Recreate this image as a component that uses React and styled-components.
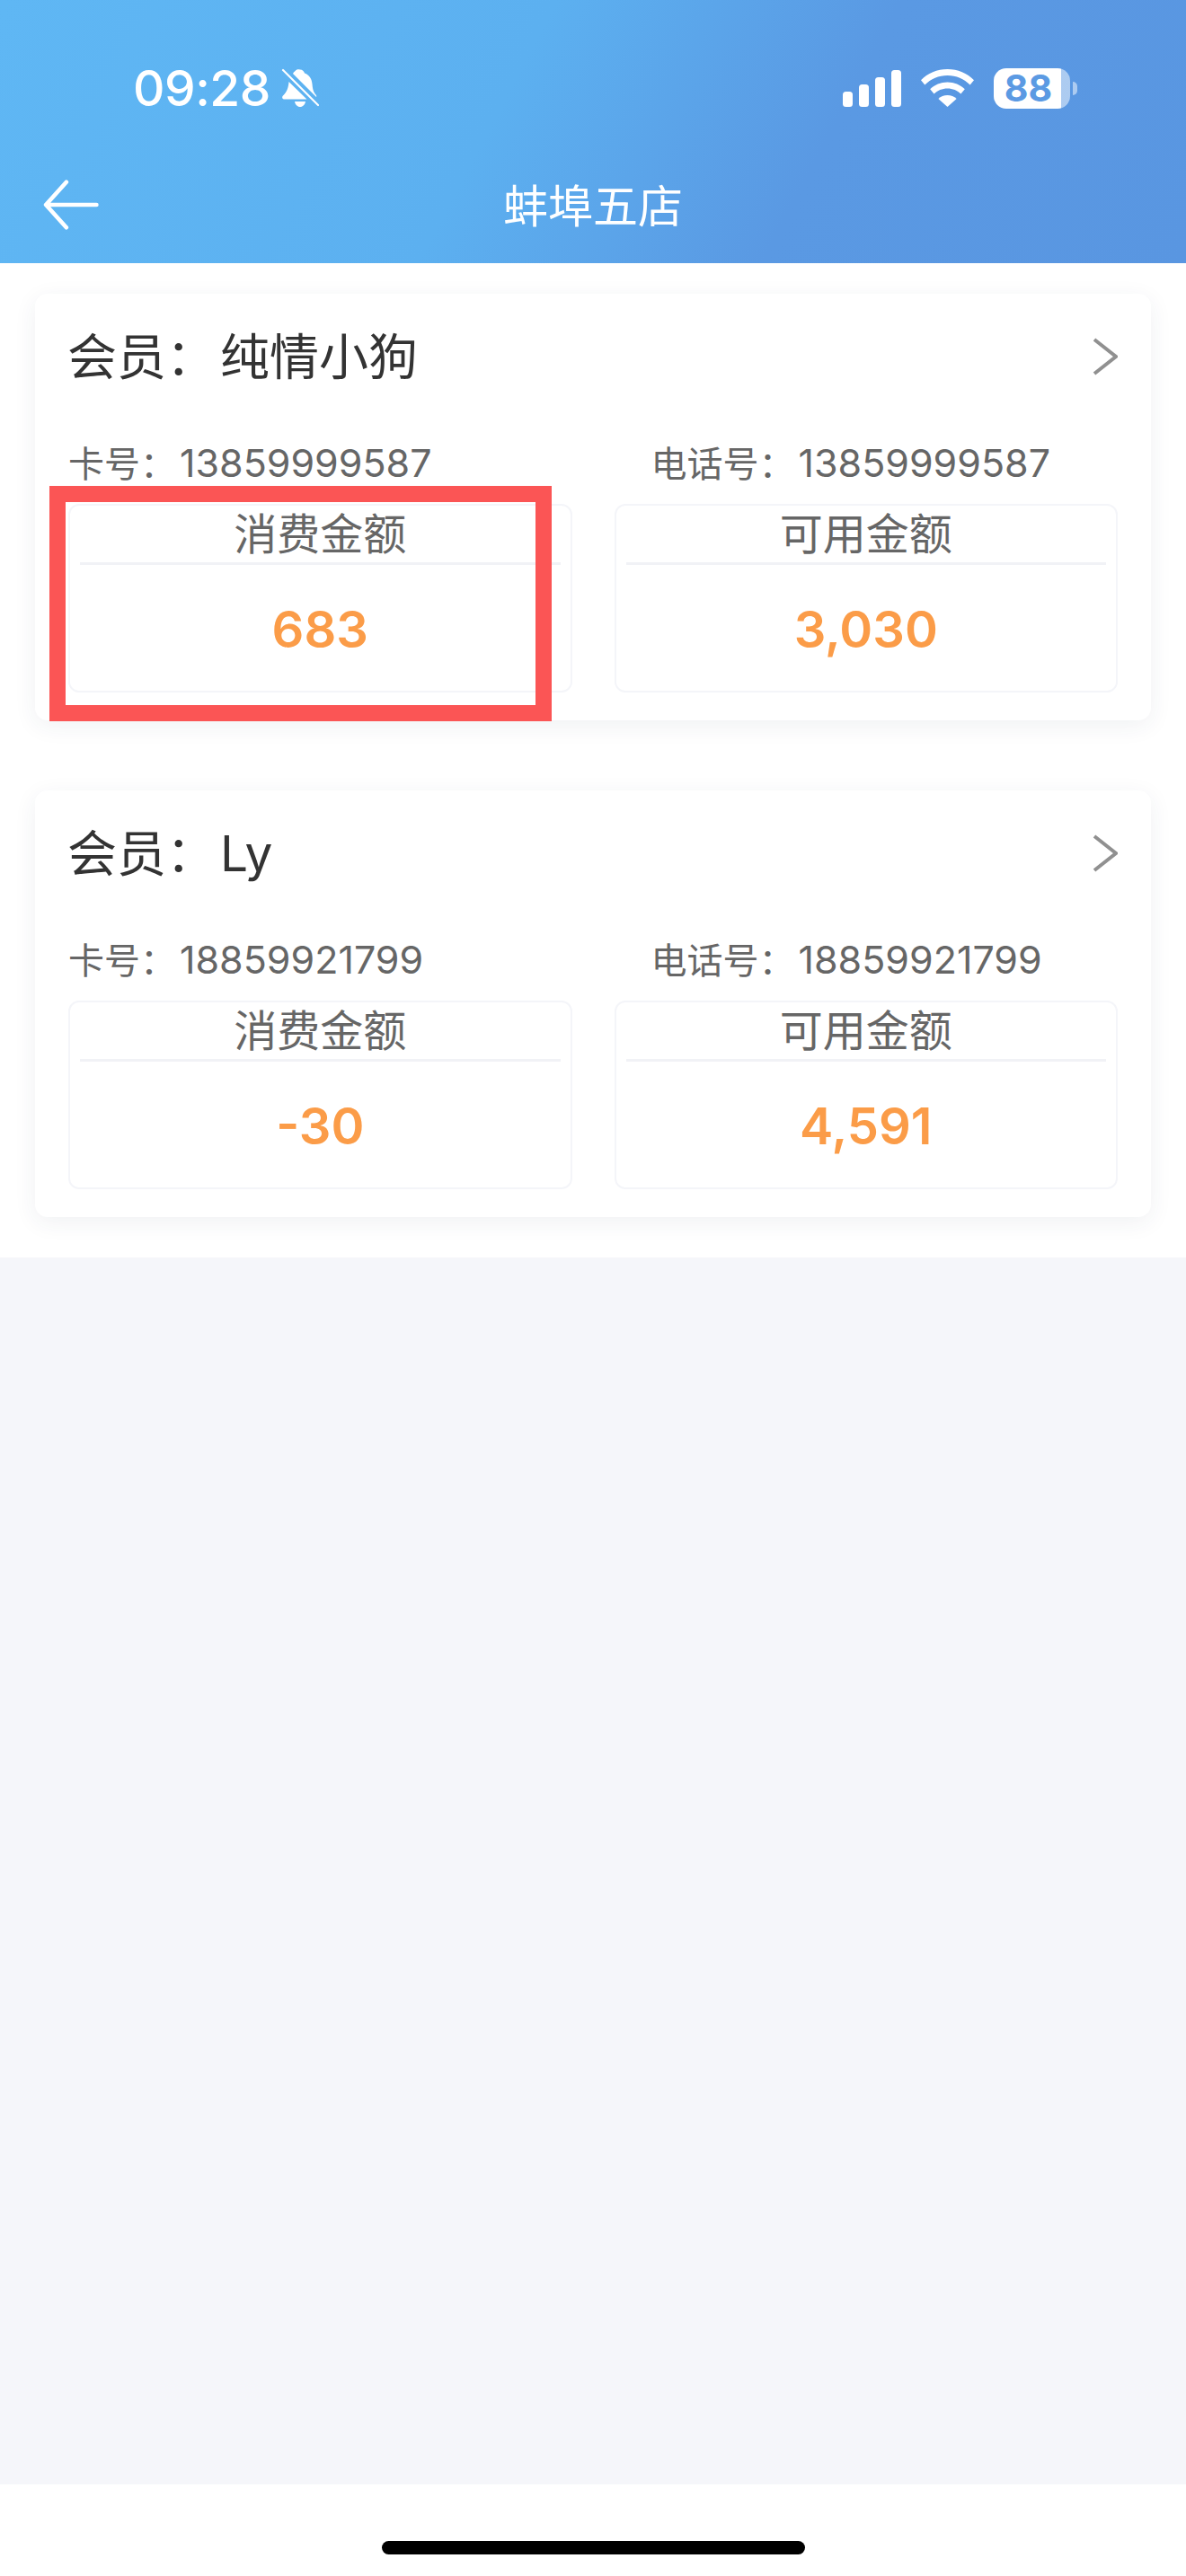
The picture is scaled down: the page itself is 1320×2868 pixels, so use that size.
import React from 'react'
import styled, { createGlobalStyle } from 'styled-components'

const FONT = '"Inter", "Noto Sans CJK SC", sans-serif'

const GlobalStyle = createGlobalStyle`
  *, *::before, *::after { box-sizing: border-box; }
  html, body { margin: 0; padding: 0; background: #fff; }
  body { font-family: ${FONT}; }
`

const members = [
  { name: '纯情小狗', card: '13859999587', phone: '13859999587', spent: '683', balance: '3,030', marked: true },
  { name: 'Ly', card: '18859921799', phone: '18859921799', spent: '-30', balance: '4,591' },
]

const App = () => {
  return (
    <Page>
      <GlobalStyle />
      <Header>
        <StatusBar>
          <StatusLeft>
            <Clock>09:28</Clock>
            <MuteBell />
          </StatusLeft>
          <StatusRight>
            <SignalBars />
            <WifiIcon />
            <Battery>88</Battery>
          </StatusRight>
        </StatusBar>
        <NavBar>
          <BackArrow />
          <NavTitle>蚌埠五店</NavTitle>
          <span />
        </NavBar>
      </Header>

      <ListSection>
        {members.map((m) => (
          <MemberCard key={m.card}>
            <CardTop>
              <MemberName>
                会员：<NameValue>{m.name}</NameValue>
              </MemberName>
              <Chevron />
            </CardTop>
            <InfoRow>
              <InfoText>
                卡号：<InfoValue>{m.card}</InfoValue>
              </InfoText>
              <InfoText $indent>
                电话号：<InfoValue>{m.phone}</InfoValue>
              </InfoText>
            </InfoRow>
            <StatGrid>
              <StatBox $marked={m.marked}>
                <StatLabel>消费金额</StatLabel>
                <StatValue>{m.spent}</StatValue>
              </StatBox>
              <StatBox>
                <StatLabel>可用金额</StatLabel>
                <StatValue>{m.balance}</StatValue>
              </StatBox>
            </StatGrid>
          </MemberCard>
        ))}
      </ListSection>

      <EmptyArea />

      <HomeBar>
        <HomeIndicator />
      </HomeBar>
    </Page>
  )
}

const MuteBell = () => (
  <BellSvg viewBox="0 0 42 44">
    <path
      d="M21 1.500c2.600 0 4.400 1.700 5 4 5.500 2 8 6.500 8.500 12 .4 5 1 8.500 4 12 .8 1 1 2 .5 2.500L13 6c1-2 3-3.500 4.500-4.500C18.500 1 20 1.500 21 1.500Z"
      fill="#fff"
    />
    <path d="M8.500 15 28.500 34.500H3.500C1 34.500.5 32 2 30.500c4-4 6-8.500 6.500-15.500Z" fill="#fff" />
    <path d="M15 37h12c-.6 3.600-3 6-6 6s-5.400-2.400-6-6Z" fill="#fff" />
    <path d="M2 2 41 41" stroke="#fff" strokeWidth="2.200" strokeLinecap="round" />
  </BellSvg>
)

const SignalBars = () => (
  <SignalSvg viewBox="0 0 65 41" fill="#fff">
    <rect x="0" y="24" width="11" height="17" rx="3.500" />
    <rect x="18" y="16" width="11" height="25" rx="3.500" />
    <rect x="36" y="8" width="11" height="33" rx="3.500" />
    <rect x="54" y="0" width="11" height="41" rx="3.500" />
  </SignalSvg>
)

const WifiIcon = () => (
  <WifiSvg viewBox="0 0 59 42" fill="#fff">
    <path d="M29.500 0C41 0 51.500 4.600 59 12.200l-4.300 5.300C48 11 39.300 7 29.500 7S11 11 4.300 17.500L0 12.200C7.500 4.600 18 0 29.500 0Z" />
    <path d="M29.500 14.500c7.500 0 14.300 3 19.300 7.800l-4.400 5.300c-3.800-3.700-9-6-14.900-6s-11.100 2.300-14.900 6l-4.400-5.300c5-4.800 11.800-7.800 19.300-7.800Z" />
    <path d="M29.500 29c3.900 0 7.500 1.500 10.100 4L29.500 42 19.400 33c2.600-2.500 6.200-4 10.100-4Z" />
  </WifiSvg>
)

const BackArrow = () => (
  <ArrowSvg viewBox="0 0 60 54">
    <path d="M57.500 27H3M25 2.500 3 27l22 24.500" />
  </ArrowSvg>
)

const Chevron = () => (
  <ChevronSvg viewBox="0 0 28 42">
    <path d="M2 2 26 21 2 40" />
  </ChevronSvg>
)

const Page = styled.div`
  width: 1320px;
  height: 2868px;
  display: flex;
  flex-direction: column;
  overflow: hidden;
`

const Header = styled.header`
  height: 293px;
  flex: none;
  padding-top: 61px;
  color: #fff;
  background: linear-gradient(118deg, #5fb7f4 0%, #5cb0f0 42%, #5a99e3 68%, #5996e1 100%);
`

const StatusBar = styled.div`
  height: 74px;
  padding: 0 129px 0 148px;
  display: flex;
  justify-content: space-between;
  align-items: center;
`

const StatusLeft = styled.div`
  display: flex;
  align-items: center;
  gap: 12px;
`

const Clock = styled.span`
  font-family: "Inter", sans-serif;
  font-size: 55px;
  font-weight: 500;
  line-height: 46px;
  letter-spacing: -0.5px;
`

const BellSvg = styled.svg`
  width: 42px;
  height: 44px;
`

const StatusRight = styled.div`
  display: flex;
  align-items: center;
  gap: 22px;
`

const SignalSvg = styled.svg`
  width: 65px;
  height: 41px;
`

const WifiSvg = styled.svg`
  width: 59px;
  height: 42px;
`

const Battery = styled.div`
  position: relative;
  width: 85px;
  height: 45px;
  border-radius: 14px;
  display: flex;
  justify-content: center;
  align-items: center;
  padding-right: 8px;
  color: #5b9ae3;
  font-family: "Inter", sans-serif;
  font-size: 41px;
  font-weight: 700;
  line-height: 45px;
  background: linear-gradient(to right, #fff 88%, rgba(255, 255, 255, 0.5) 88%);

  &::after {
    content: '';
    position: absolute;
    left: 88px;
    top: 15px;
    width: 5px;
    height: 15px;
    border-radius: 0 5px 5px 0;
    background: rgba(255, 255, 255, 0.5);
  }
`

const NavBar = styled.div`
  margin-top: 63px;
  height: 56px;
  padding: 0 48px;
  display: grid;
  grid-template-columns: 1fr auto 1fr;
  align-items: center;
`

const ArrowSvg = styled.svg`
  width: 62px;
  height: 56px;
  fill: none;
  stroke: #fff;
  stroke-width: 4.500;
  stroke-linecap: round;
  stroke-linejoin: round;
`

const NavTitle = styled.h1`
  margin: 0;
  padding-top: 4px;
  font-size: 50px;
  font-weight: 400;
  line-height: 56px;
`

const ListSection = styled.main`
  flex: none;
  height: 1107px;
  padding: 34px 39px 0;
  background: #fff;
  display: flex;
  flex-direction: column;
  gap: 78px;
`

const MemberCard = styled.section`
  height: 475px;
  padding: 38px 37px 31px;
  background: #fff;
  border-radius: 14px;
  box-shadow: 0 6px 26px rgba(40, 50, 80, 0.07);
`

const CardTop = styled.div`
  display: flex;
  justify-content: space-between;
  align-items: center;
  height: 64px;
`

const MemberName = styled.div`
  margin-left: -1px;
  font-size: 55px;
  line-height: 64px;
  color: #333;
`

const NameValue = styled.span`
  margin-left: 5px;
`

const ChevronSvg = styled.svg`
  width: 28px;
  height: 42px;
  fill: none;
  stroke: #909090;
  stroke-width: 4;
`

const InfoRow = styled.div`
  display: grid;
  grid-template-columns: 1fr 1fr;
  gap: 47px;
  margin-top: 61px;
  height: 50px;
`

const InfoText = styled.div`
  padding-left: ${(p) => (p.$indent ? '41px' : '0')};
  font-size: 40px;
  line-height: 50px;
  color: #666;
`

const InfoValue = styled.span`
  margin-left: 4px;
  font-size: 43px;
`

const StatGrid = styled.div`
  display: grid;
  grid-template-columns: 1fr 1fr;
  gap: 47px;
  margin-top: 21px;
`

const StatBox = styled.div`
  position: relative;
  height: 210px;
  padding: 0 11px;
  border: 2px solid #f4f5f9;
  border-radius: 12px;

  ${(p) =>
    p.$marked &&
    `
    &::after {
      content: '';
      position: absolute;
      left: -23px;
      top: -22px;
      width: 559px;
      height: 262px;
      border: 18px solid #fb5555;
    }
  `}
`

const StatLabel = styled.div`
  height: 66px;
  padding-top: 3px;
  border-bottom: 3px solid #f1f2f6;
  text-align: center;
  font-size: 48px;
  line-height: 58px;
  color: #666;
`

const StatValue = styled.div`
  margin-top: 42px;
  text-align: center;
  font-size: 56px;
  font-weight: 600;
  line-height: 60px;
  color: #fb9c48;
`

const EmptyArea = styled.div`
  flex: 1;
  background: #f5f6fa;
`

const HomeBar = styled.footer`
  flex: none;
  height: 102px;
  padding-top: 63px;
  background: #fff;
  display: flex;
  justify-content: center;
`

const HomeIndicator = styled.div`
  width: 471px;
  height: 15px;
  border-radius: 8px;
  background: #000;
`

export default App
